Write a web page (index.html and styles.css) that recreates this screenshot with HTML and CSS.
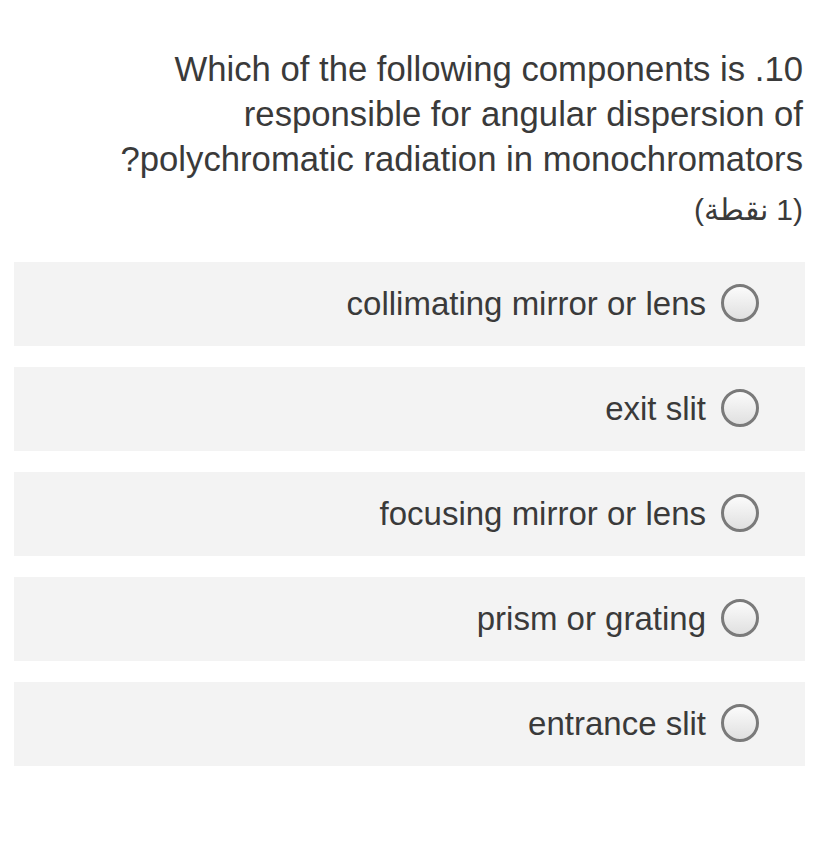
FILE: index.html
```html
<!DOCTYPE html>
<html>
<head>
<meta charset="utf-8">
<link rel="stylesheet" href="styles.css">
</head>
<body>
<div class="page">
  <div class="question">
    <span class="qline">Which of the following components is .10</span>
    <span class="qline">responsible for angular dispersion of</span>
    <span class="qline">?polychromatic radiation in monochromators</span>
    <span class="points" dir="rtl">(1 نقطة)</span>
  </div>
  <div class="options">
    <label class="option"><span class="opt-text">collimating mirror or lens</span><span class="radio"></span></label>
    <label class="option"><span class="opt-text">exit slit</span><span class="radio"></span></label>
    <label class="option"><span class="opt-text">focusing mirror or lens</span><span class="radio"></span></label>
    <label class="option"><span class="opt-text">prism or grating</span><span class="radio"></span></label>
    <label class="option"><span class="opt-text">entrance slit</span><span class="radio"></span></label>
  </div>
</div>
</body>
</html>
```
FILE: styles.css
```css
html, body {
  margin: 0;
  padding: 0;
  background: #ffffff;
}
.page {
  width: 820px;
  height: 850px;
  font-family: "Liberation Sans", Arial, sans-serif;
  color: #3a3a3a;
  padding: 47px 15px 0 14px;
  box-sizing: border-box;
}
.question {
  display: flex;
  flex-direction: column;
  align-items: flex-end;
  font-size: 34.7px;
  line-height: 45px;
  padding-right: 2px;
}
.qline {
  display: block;
  white-space: nowrap;
}
.points {
  display: block;
  font-size: 30px;
  line-height: 45px;
  margin-top: 5px;
}
.options {
  display: flex;
  flex-direction: column;
  gap: 21px;
  margin-top: 30px;
}
.option {
  height: 84px;
  background: #f3f3f3;
  display: flex;
  align-items: center;
  justify-content: flex-end;
  padding-right: 46px;
  gap: 15px;
}
.opt-text {
  font-size: 33px;
}
.radio {
  width: 38px;
  height: 38px;
  margin-top: -2px;
  border: 3px solid #7a7a7a;
  border-radius: 50%;
  background: linear-gradient(#fbfbfb, #e0e0e0);
  box-sizing: border-box;
}
```
